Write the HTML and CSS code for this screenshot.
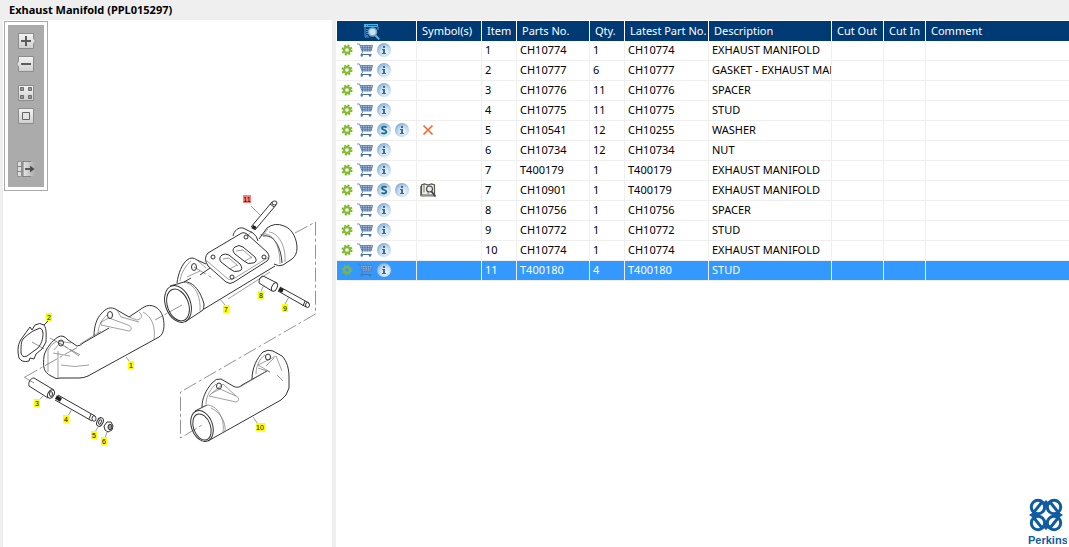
FILE: index.html
```html
<!DOCTYPE html>
<html lang="en">
<head>
  <meta charset="UTF-8">
  <title>Exhaust Manifold (PPL015297)</title>
  <meta name="viewport" content="width=device-width, initial-scale=1.0">
  <link rel="stylesheet" href="styles.css">
</head>
<body>

  <!-- Shared icons -->
  <svg class="sprite" aria-hidden="true">
    <defs>
      <radialGradient id="ball" cx="60%" cy="65%" r="65%">
        <stop offset="0" stop-color="#f0f8fd"/>
        <stop offset="0.6" stop-color="#c3dbec"/>
        <stop offset="1" stop-color="#86aed0"/>
      </radialGradient>
      <linearGradient id="key" x1="0" y1="0" x2="0" y2="1">
        <stop offset="0" stop-color="#f4f4f4"/>
        <stop offset="1" stop-color="#cfcfcf"/>
      </linearGradient>
      <linearGradient id="fade" x1="0" y1="0" x2="1" y2="0">
        <stop offset="0" stop-color="#e6e6e6"/>
        <stop offset="1" stop-color="#ababab"/>
      </linearGradient>
    </defs>
    <symbol id="gear" viewBox="0 0 12 12">
      <circle cx="6" cy="6" r="4.6" fill="none" stroke="#7db52c" stroke-width="1.8" stroke-dasharray="2 1.61"/>
      <circle cx="6" cy="6" r="3" fill="none" stroke="#86bb34" stroke-width="2.4"/>
    </symbol>
    <symbol id="cart" viewBox="0 0 16 14">
      <path d="M3 2.5h12.5l-1.5 5.5h-9z" fill="#b4c9e4"/>
      <path d="M0 1h2.500l3 8.500M3 2.500h12.700M3.800 4.400h11.400M4.400 6.200h10.400M5 8h9.200M15.500 2.500l-1.400 5.500M5.600 2.500v5.500M8 2.500v5.500M10.400 2.500v5.500M12.800 2.500v5.500" fill="none" stroke="#4f74a8" stroke-width="0.8"/>
      <path d="M5.500 9.500l-1.500 2h10.500" fill="none" stroke="#4a6fa5" stroke-width="1"/>
      <circle cx="4.800" cy="12.600" r="1.200" fill="#55779f"/>
      <circle cx="13" cy="12.600" r="1.200" fill="#55779f"/>
    </symbol>
    <symbol id="info" viewBox="0 0 14 14">
      <circle cx="7" cy="7" r="7" fill="url(#ball)"/>
      <path d="M6 3h2v2h-2zM5 6h3v4h1v1h-4v-1h1v-3h-1z" fill="#3f68ab"/>
    </symbol>
    <symbol id="super" viewBox="0 0 14 14">
      <circle cx="7" cy="7" r="7" fill="url(#ball)"/>
      <path d="M9.6 4.4C8.500 3.500 5 3.100 5 5.200C5 7.200 9.300 6.500 9.300 8.800C9.300 11 5.600 10.700 4.400 9.600" fill="none" stroke="#1a6896" stroke-width="1.9"/>
    </symbol>
    <symbol id="cross" viewBox="0 0 12 12">
      <path d="M1.500 1.500l9 9M10.500 1.500l-9 9" stroke="#f36a2c" stroke-width="1.700"/>
    </symbol>
    <symbol id="book" viewBox="0 0 16 14">
      <path d="M1.500 2v10h13v-10l-3-1-3.500 1-3.500-1z" fill="#f2f2ec" stroke="#55574a" stroke-width="1.200"/>
      <path d="M0.600 3v10h14.800M4 1.500v8M8 2v9" fill="none" stroke="#77796a" stroke-width="1"/>
      <circle cx="9.500" cy="6" r="3" fill="#e9eef0" stroke="#444" stroke-width="1.100"/>
      <path d="M11.500 8.500l4 5" stroke="#444" stroke-width="1.800"/>
    </symbol>
    <symbol id="find" viewBox="0 0 16 16">
      <path d="M0 0h14v3h-14z" fill="#4db2e4"/>
      <path d="M1 3v10h4M14 3v3" fill="none" stroke="#4d9bd0" stroke-width="1"/>
      <path d="M3 5v7" stroke="#b9d9ec" stroke-width="1" stroke-dasharray="1 1"/>
      <path d="M2 1.500h1M4 1.500h9" stroke="#1b5f9c" stroke-width="1"/>
      <circle cx="8.500" cy="8" r="4" fill="#c9dfeb" stroke="#6fa6c6" stroke-width="1.600"/>
      <path d="M11.500 11.500l3.700 3.800" stroke="#75b2dc" stroke-width="1.900"/>
    </symbol>
  </svg>

  <header class="titlebar">
    <h1>Exhaust Manifold (PPL015297)</h1>
  </header>

  <div class="panes">
    <section class="drawing">
      <div class="toolbar">
        <button class="tool" aria-label="Zoom in">
          <svg viewBox="0 0 20 16"><path d="M2.500 0.500h15v5l2 2.500-2 2.500v5h-15z" fill="url(#key)" stroke="#8c8c8c"/><path d="M5 8h10M10 3v10" stroke="#5c5c5c" stroke-width="2"/></svg>
        </button>
        <button class="tool" aria-label="Zoom out">
          <svg viewBox="0 0 20 16"><path d="M2.500 0.500h15v15h-15v-5l-2-2.500 2-2.500z" fill="url(#key)" stroke="#8c8c8c"/><path d="M5 8h10" stroke="#5c5c5c" stroke-width="2"/></svg>
        </button>
        <button class="tool tool-fit" aria-label="Fit to window">
          <svg viewBox="0 0 20 16"><path d="M2.500 0.500h15v15h-15z" fill="url(#key)" stroke="#8c8c8c"/><path d="M4.500 2.500h3v3h-3zM12.500 2.500h3v3h-3zM4.500 10.500h3v3h-3zM12.500 10.500h3v3h-3z" fill="#999" stroke="#6a6a6a"/></svg>
        </button>
        <button class="tool" aria-label="Actual size">
          <svg viewBox="0 0 20 16"><path d="M2.500 0.500h15v15h-15z" fill="url(#key)" stroke="#8c8c8c"/><path d="M6.500 4.500h7v7h-7z" fill="#e4e4e4" stroke="#666"/></svg>
        </button>
        <button class="tool tool-list" aria-label="Hide parts list">
          <svg viewBox="0 0 20 16"><path d="M7 1h12v14h-12z" fill="url(#fade)"/><path d="M1.500 0.500h4v15h-4z" fill="#ddd" stroke="#929292"/><path d="M1 5.500h5M1 10.500h5M7 0.500h8M7 15.500h8" stroke="#858585"/><path d="M7 0v16" stroke="#777"/><path d="M9 8h7" stroke="#4d4d4d" stroke-width="1.800"/><path d="M14 4.500l4.500 3.500-4.500 3.500z" fill="#4d4d4d"/></svg>
        </button>
      </div>

      <svg class="diagram" viewBox="3 191 329 260" role="img" aria-label="Exploded view of the exhaust manifold">
        <!-- centre lines -->
        <g class="axis">
          <path d="M295 233L315.500 222V314L180.500 392V438L202 425"/>
          <path d="M182 305L155 320M25 377L78 347M24 377L34 383M50 338L80 355M32 342L46 350M194 267L214 279"/>
        </g>

        <!-- 1: front section -->
        <g class="part">
          <path d="M94 336C94 326 97 318 101 314C106 308 111 306 117 310L129 317L144 307C151 303 160 307 163 317C165 326 164 334 159 337L88 376Q84 378 79 378L61 378Q56 380 51 376C43 372 43 366 44 356C46 348 52 341 58 337Q63 334 68 340L77 346Q80 346 83 343L109 328"/>
          <path class="thin" d="M80 344L101 331M101 325L129 331C133 330 131 326 128 325L109 318L101 322ZM117 310L121 317L139 322M129 317L137 320C143 319 142 314 139 312M143 312C151 316 156 326 154 339M53 353L70 356M54 350L60 343L79 356M58 341L71 343M58 351V378M61 365Q74 368 89 365M48 372V350Q51 344 57 341M98 334C98 326 102 319 107 315M126 357L130 362"/>
          <ellipse cx="61" cy="343" rx="2.500" ry="3"/>
          <ellipse cx="110" cy="315" rx="2.500" ry="3.500"/>
        </g>

        <!-- 2: gasket -->
        <g class="part">
          <path d="M30 327L32 330L35 325Q40 322 44 325C47 329 46 336 46 342L42 349L36 354L34 359L30 358L29 361Q22 363 19 358C17 350 18 343 22 338Z"/>
          <path d="M23 339Q28 334 33 331L40 328Q43 329 43 333C43 340 41 344 38 348L27 356Q22 358 21 353C21 346 21 342 23 339Z"/>
          <path d="M44 325L48 321"/>
        </g>

        <!-- 3 to 6: spacer, stud, washer, nut -->
        <g class="part">
          <path d="M34 378L54 390M29 386L48 398M34 378C30 378 28 383 29 386"/>
          <ellipse cx="51" cy="394" rx="3" ry="4.500" transform="rotate(30 51 394)"/>
          <ellipse cx="51" cy="394" rx="1.500" ry="2.500"/>
          <path d="M58 395L95 416M55 400L92 421"/>
          <path class="thread" d="M56 397L61 400"/>
          <ellipse cx="94" cy="418.500" rx="2" ry="2.800"/>
          <path d="M91 414L89 419"/>
          <ellipse cx="100" cy="422" rx="3" ry="4.500" transform="rotate(25 100 422)"/>
          <ellipse cx="100" cy="422" rx="1.300" ry="2.300" transform="rotate(25 100 422)"/>
          <path d="M104 426L107 422L111 422L113 426L112 430L108 432L105 430Z"/>
          <ellipse class="dark" cx="110" cy="427" rx="2" ry="2.800"/>
          <path class="thin" d="M43 396L39 400M72 409L68 416M98 427L95 432M107 432L105 438"/>
        </g>

        <!-- 7: centre section -->
        <g class="part">
          <path d="M177 283C178 274 182 264 187 260Q192 256 197 260L206 264M204 309L275 266M200 275L210 268M184 282L191 278"/>
          <path class="thin" d="M180 281C181 273 186 265 191 261M187 277L200 271M198 261L206 268M228 299L270 272"/>
          <ellipse cx="194" cy="267" rx="2.500" ry="3.500"/>
          <path d="M233 236C234 231 238 227 243 228L253 233Q257 236 258 241"/>
          <ellipse cx="178" cy="304" rx="12.500" ry="19" transform="rotate(-20 178 304)"/>
          <ellipse cx="178" cy="305" rx="10.500" ry="16.500" transform="rotate(-20 178 305)"/>
          <path d="M170 286L184 282C194 281 201 293 204 304Q204 308 203 310L185 322"/>
          <path class="thin" d="M187 283C196 286 201 298 200 311"/>
          <path d="M259 239L267 228Q275 222 284 226C293 229 297 240 297 248Q297 255 292 259L283 265Q279 267 274 264M263 236C274 234 281 247 282 263"/>
          <path class="thin" d="M260 235C271 230 280 243 280 264M269 232C279 233 286 247 285 262M268 229L262 236"/>
          <path class="solid" d="M208 253L240 234Q244 231 248 235L267 252Q271 257 267 261L234 282Q230 285 226 282L208 266Q203 258 208 253Z"/>
          <path class="thin" d="M207 261L228 279Q231 281 235 278L269 257"/>
          <path d="M222 255Q225 253 229 255L240 264Q244 270 239 271Q234 273 230 269L221 262Q218 258 222 255Z"/>
          <path d="M235 247Q239 244 243 247L255 257Q258 262 253 263Q248 265 244 261L235 254Q231 250 235 247Z"/>
          <path class="thin" d="M223 259L229 258L238 266M230 269L237 265M236 251L243 250L252 258M245 261L252 257"/>
          <circle cx="213" cy="257" r="2"/>
          <circle cx="246" cy="237" r="2"/>
          <circle cx="264" cy="257" r="2"/>
          <circle cx="232" cy="277" r="2"/>
          <path class="thin" d="M220 299L225 305"/>
        </g>

        <!-- 8, 9, 11: spacer and studs -->
        <g class="part">
          <path d="M263 276L277 283M259 283L272 291M263 276Q259 277 259 283"/>
          <ellipse cx="274.500" cy="287" rx="2.600" ry="4.500" transform="rotate(25 274.500 287)"/>
          <path d="M280 287L309 303M278 291L306 307M305 301L303 306"/>
          <path class="thread" d="M279 289L283 291"/>
          <ellipse cx="307.500" cy="305" rx="2" ry="2.500"/>
          <path d="M251 227L272 202M255 230L276 205M270 204L274 207"/>
          <path class="thread" d="M253 229L255 226"/>
          <ellipse cx="274.500" cy="203" rx="2.500" ry="2"/>
          <path class="thin" d="M251 206L260 215M264 285L261 291M289 297L285 304M248 235L252 231"/>
        </g>

        <!-- 10: rear section -->
        <g class="part">
          <path d="M202 407C202 398 206 390 212 383Q216 378 221 379L233 386Q238 389 242 385L267 371M252 379C252 368 257 358 263 352Q268 349 273 351L282 356C287 361 289 369 289 377V388Q287 396 281 400L208 441M195 411L207 405"/>
          <ellipse cx="202" cy="426" rx="10.500" ry="16" transform="rotate(-20 202 426)"/>
          <ellipse cx="202" cy="427" rx="8.500" ry="13.500" transform="rotate(-20 202 427)"/>
          <path class="thin" d="M207 405C217 405 225 418 223 432M211 408C220 412 226 422 225 431M209 396L236 402C240 401 239 397 236 396L220 389L212 393ZM211 394L223 384L236 396M258 368L270 372L258 365L276 356L282 371M267 371L240 387M274 358L266 366M206 404C206 396 211 388 216 384M256 374C256 366 260 358 265 355M277 375L283 381"/>
          <ellipse cx="219" cy="386" rx="2.500" ry="3"/>
          <ellipse cx="268" cy="357" rx="2.500" ry="3"/>
          <path class="thin" d="M253 417L258 424"/>
        </g>

        <!-- callouts -->
        <g class="callout">
          <rect x="46" y="313" width="6" height="8"/><text x="49" y="320">2</text>
          <rect x="128" y="361" width="6" height="8"/><text x="131" y="368">1</text>
          <rect x="34" y="399" width="6" height="8"/><text x="37" y="406">3</text>
          <rect x="63" y="415" width="6" height="8"/><text x="66" y="422">4</text>
          <rect x="91" y="431" width="6" height="8"/><text x="94" y="438">5</text>
          <rect x="101" y="437" width="6" height="8"/><text x="104" y="444">6</text>
          <rect x="223" y="305" width="6" height="8"/><text x="226" y="312">7</text>
          <rect x="258" y="291" width="6" height="8"/><text x="261" y="298">8</text>
          <rect x="282" y="304" width="6" height="8"/><text x="285" y="311">9</text>
          <rect x="256" y="423" width="9" height="8"/><text x="260" y="430">10</text>
          <rect class="current" x="243" y="195" width="8" height="8"/><text x="247" y="202">11</text>
        </g>
      </svg>
    </section>

    <main class="parts">
      <table>
        <colgroup>
          <col class="c-tools"><col class="c-symbol"><col class="c-item"><col class="c-part"><col class="c-qty">
          <col class="c-latest"><col class="c-desc"><col class="c-out"><col class="c-in"><col>
        </colgroup>
        <thead>
          <tr>
            <th class="find"><button class="icon" aria-label="Search parts"><svg class="i-find"><use href="#find"/></svg></button></th>
            <th>Symbol(s)</th><th>Item</th><th>Parts No.</th><th>Qty.</th><th>Latest Part No.</th><th>Description</th><th>Cut Out</th><th>Cut In</th><th>Comment</th>
          </tr>
        </thead>
        <tbody>
          <tr>
            <td class="tools"><button class="icon" aria-label="Options"><svg class="i-gear"><use href="#gear"/></svg></button><button class="icon" aria-label="Add to cart"><svg class="i-cart"><use href="#cart"/></svg></button><button class="icon" aria-label="Info"><svg class="i-ball"><use href="#info"/></svg></button></td>
            <td></td><td>1</td><td>CH10774</td><td>1</td><td>CH10774</td><td>EXHAUST MANIFOLD</td><td></td><td></td><td></td>
          </tr>
          <tr>
            <td class="tools"><button class="icon" aria-label="Options"><svg class="i-gear"><use href="#gear"/></svg></button><button class="icon" aria-label="Add to cart"><svg class="i-cart"><use href="#cart"/></svg></button><button class="icon" aria-label="Info"><svg class="i-ball"><use href="#info"/></svg></button></td>
            <td></td><td>2</td><td>CH10777</td><td>6</td><td>CH10777</td><td>GASKET - EXHAUST MANIFOLD</td><td></td><td></td><td></td>
          </tr>
          <tr>
            <td class="tools"><button class="icon" aria-label="Options"><svg class="i-gear"><use href="#gear"/></svg></button><button class="icon" aria-label="Add to cart"><svg class="i-cart"><use href="#cart"/></svg></button><button class="icon" aria-label="Info"><svg class="i-ball"><use href="#info"/></svg></button></td>
            <td></td><td>3</td><td>CH10776</td><td>11</td><td>CH10776</td><td>SPACER</td><td></td><td></td><td></td>
          </tr>
          <tr>
            <td class="tools"><button class="icon" aria-label="Options"><svg class="i-gear"><use href="#gear"/></svg></button><button class="icon" aria-label="Add to cart"><svg class="i-cart"><use href="#cart"/></svg></button><button class="icon" aria-label="Info"><svg class="i-ball"><use href="#info"/></svg></button></td>
            <td></td><td>4</td><td>CH10775</td><td>11</td><td>CH10775</td><td>STUD</td><td></td><td></td><td></td>
          </tr>
          <tr>
            <td class="tools"><button class="icon" aria-label="Options"><svg class="i-gear"><use href="#gear"/></svg></button><button class="icon" aria-label="Add to cart"><svg class="i-cart"><use href="#cart"/></svg></button><button class="icon" aria-label="Superseded"><svg class="i-ball"><use href="#super"/></svg></button><button class="icon" aria-label="Info"><svg class="i-ball"><use href="#info"/></svg></button></td>
            <td class="symbol"><svg class="i-cross"><use href="#cross"/></svg></td><td>5</td><td>CH10541</td><td>12</td><td>CH10255</td><td>WASHER</td><td></td><td></td><td></td>
          </tr>
          <tr>
            <td class="tools"><button class="icon" aria-label="Options"><svg class="i-gear"><use href="#gear"/></svg></button><button class="icon" aria-label="Add to cart"><svg class="i-cart"><use href="#cart"/></svg></button><button class="icon" aria-label="Info"><svg class="i-ball"><use href="#info"/></svg></button></td>
            <td></td><td>6</td><td>CH10734</td><td>12</td><td>CH10734</td><td>NUT</td><td></td><td></td><td></td>
          </tr>
          <tr>
            <td class="tools"><button class="icon" aria-label="Options"><svg class="i-gear"><use href="#gear"/></svg></button><button class="icon" aria-label="Add to cart"><svg class="i-cart"><use href="#cart"/></svg></button><button class="icon" aria-label="Info"><svg class="i-ball"><use href="#info"/></svg></button></td>
            <td></td><td>7</td><td>T400179</td><td>1</td><td>T400179</td><td>EXHAUST MANIFOLD</td><td></td><td></td><td></td>
          </tr>
          <tr>
            <td class="tools"><button class="icon" aria-label="Options"><svg class="i-gear"><use href="#gear"/></svg></button><button class="icon" aria-label="Add to cart"><svg class="i-cart"><use href="#cart"/></svg></button><button class="icon" aria-label="Superseded"><svg class="i-ball"><use href="#super"/></svg></button><button class="icon" aria-label="Info"><svg class="i-ball"><use href="#info"/></svg></button></td>
            <td class="symbol"><svg class="i-book"><use href="#book"/></svg></td><td>7</td><td>CH10901</td><td>1</td><td>T400179</td><td>EXHAUST MANIFOLD</td><td></td><td></td><td></td>
          </tr>
          <tr>
            <td class="tools"><button class="icon" aria-label="Options"><svg class="i-gear"><use href="#gear"/></svg></button><button class="icon" aria-label="Add to cart"><svg class="i-cart"><use href="#cart"/></svg></button><button class="icon" aria-label="Info"><svg class="i-ball"><use href="#info"/></svg></button></td>
            <td></td><td>8</td><td>CH10756</td><td>1</td><td>CH10756</td><td>SPACER</td><td></td><td></td><td></td>
          </tr>
          <tr>
            <td class="tools"><button class="icon" aria-label="Options"><svg class="i-gear"><use href="#gear"/></svg></button><button class="icon" aria-label="Add to cart"><svg class="i-cart"><use href="#cart"/></svg></button><button class="icon" aria-label="Info"><svg class="i-ball"><use href="#info"/></svg></button></td>
            <td></td><td>9</td><td>CH10772</td><td>1</td><td>CH10772</td><td>STUD</td><td></td><td></td><td></td>
          </tr>
          <tr>
            <td class="tools"><button class="icon" aria-label="Options"><svg class="i-gear"><use href="#gear"/></svg></button><button class="icon" aria-label="Add to cart"><svg class="i-cart"><use href="#cart"/></svg></button><button class="icon" aria-label="Info"><svg class="i-ball"><use href="#info"/></svg></button></td>
            <td></td><td>10</td><td>CH10774</td><td>1</td><td>CH10774</td><td>EXHAUST MANIFOLD</td><td></td><td></td><td></td>
          </tr>
          <tr class="selected">
            <td class="tools"><button class="icon" aria-label="Options"><svg class="i-gear"><use href="#gear"/></svg></button><button class="icon" aria-label="Add to cart"><svg class="i-cart"><use href="#cart"/></svg></button><button class="icon" aria-label="Info"><svg class="i-ball"><use href="#info"/></svg></button></td>
            <td></td><td>11</td><td>T400180</td><td>4</td><td>T400180</td><td>STUD</td><td></td><td></td><td></td>
          </tr>
        </tbody>
      </table>

      <svg class="logo" viewBox="0 0 40 48" role="img" aria-label="Perkins">
        <g fill="none" stroke="#0f5ca3" stroke-width="3">
          <circle cx="11" cy="9" r="6.700"/>
          <circle cx="27" cy="9" r="6.700"/>
          <circle cx="11" cy="25" r="6.700"/>
          <circle cx="27" cy="25" r="6.700"/>
          <path d="M7 14L15 4M23 4L31 14M7 20L15 30M23 30L31 20"/>
        </g>
        <path d="M2 17L8 13L13 17L8 21ZM36 17L30 13L25 17L30 21ZM19 2L23 6L19 12L15 6ZM19 32L23 28L19 22L15 28Z" fill="#0f5ca3"/>
        <text x="1" y="46">Perkins</text>
      </svg>
    </main>
  </div>

</body>
</html>
```

FILE: styles.css
```css
:root {
  --frame: #efefef;
  --header-bg: #003a75;
  --selected-bg: #3399ff;
  --tool-bg: #ababab;
  --brand: #0f5ca3;
}

* {
  margin: 0;
  padding: 0;
  box-sizing: border-box;
}

body {
  font-family: 'Noto Sans', sans-serif;
  font-size: 11px;
  line-height: 16px;
  color: #000;
  background: var(--frame);
  display: flex;
  flex-direction: column;
  height: 100vh;
  overflow: hidden;
}

button {
  background: none;
  border: none;
  cursor: pointer;
}

.sprite {
  position: absolute;
  width: 0;
  height: 0;
}

.titlebar {
  height: 20px;
  padding: 2px 9px;
}

.titlebar h1 {
  font-size: 11px;
  line-height: 16px;
  font-weight: 700;
}

.panes {
  flex: 1;
  display: grid;
  grid-template-columns: 329px 1fr;
  gap: 4px;
  padding-left: 3px;
  min-height: 0;
}

/* Drawing */
.drawing {
  background: #fff;
  display: flex;
  flex-direction: column;
  align-items: flex-start;
  overflow: hidden;
}

.toolbar {
  display: flex;
  flex-direction: column;
  align-items: center;
  gap: 7px;
  width: 44px;
  height: 170px;
  margin: 1px 0 0 1px;
  padding-top: 11px;
  background: var(--tool-bg);
  border: 1px solid #aaa;
  box-shadow: inset 0 0 0 3px #fff;
}

.tool,
.tool svg {
  display: block;
  width: 20px;
  height: 16px;
}

.tool-fit {
  margin-top: 6px;
}

.tool-list {
  margin-top: 30px;
}

.diagram {
  width: 100%;
  flex-shrink: 0;
}

.axis {
  fill: none;
  stroke: #777;
  stroke-width: 0.8;
  stroke-dasharray: 14 3 3 3;
}

.part {
  fill: none;
  stroke: #333;
  stroke-width: 1;
}

.part .thin {
  stroke: #777;
  stroke-width: 0.7;
}

.part .thread {
  stroke: #222;
  stroke-width: 4;
}

.part .solid {
  fill: #fff;
}

.part .dark {
  fill: #999;
}

.callout rect {
  fill: #ff0;
}

.callout .current {
  fill: #f58282;
}

.callout text {
  font-family: 'Liberation Sans', sans-serif;
  font-size: 7px;
  text-anchor: middle;
}

/* Parts list */
.parts {
  background: #fff;
  display: flex;
  flex-direction: column;
  padding: 1px 0 0 1px;
  overflow: hidden;
}

table {
  width: 100%;
  table-layout: fixed;
  border-collapse: separate;
  border-spacing: 0;
}

.c-tools { width: 80px; }
.c-symbol { width: 65px; }
.c-item { width: 35px; }
.c-part { width: 73px; }
.c-qty { width: 35px; }
.c-latest { width: 84px; }
.c-desc { width: 123px; }
.c-out { width: 52px; }
.c-in { width: 42px; }

th,
td {
  height: 20px;
  text-align: left;
  white-space: nowrap;
  overflow: hidden;
  border-right: 1px solid var(--frame);
}

th {
  padding-left: 5px;
  font-weight: 400;
  color: #fff;
  background: var(--header-bg);
  border-right-color: #fff;
}

td {
  padding-left: 3px;
  padding-bottom: 2px;
  border-bottom: 1px solid var(--frame);
}

th:last-child,
td:last-child {
  border-right: none;
}

.find {
  padding: 0 10px 0 0;
  text-align: center;
}

.tools {
  padding-left: 4px;
}

.icon,
.icon svg,
.symbol svg {
  display: inline-block;
  vertical-align: middle;
}

.icon {
  height: 16px;
  margin-right: 4px;
  line-height: 0;
}

.find .icon {
  margin: 0;
}

.i-find { width: 16px; height: 16px; }
.i-gear { width: 12px; height: 12px; }
.i-cart { width: 16px; height: 14px; }
.i-ball { width: 14px; height: 14px; }
.i-cross { width: 16px; height: 12px; }
.i-book { width: 16px; height: 14px; }

.tools,
.symbol {
  line-height: 0;
}

.selected td {
  color: #fff;
  background: var(--selected-bg);
}

.selected .i-gear,
.selected .i-cart {
  opacity: 0.8;
}

.logo {
  width: 40px;
  height: 48px;
  margin: auto 2px 1px 0;
  align-self: flex-end;
}

.logo text {
  font-family: 'Liberation Sans', sans-serif;
  font-size: 11px;
  font-weight: 700;
  fill: var(--brand);
}
```
